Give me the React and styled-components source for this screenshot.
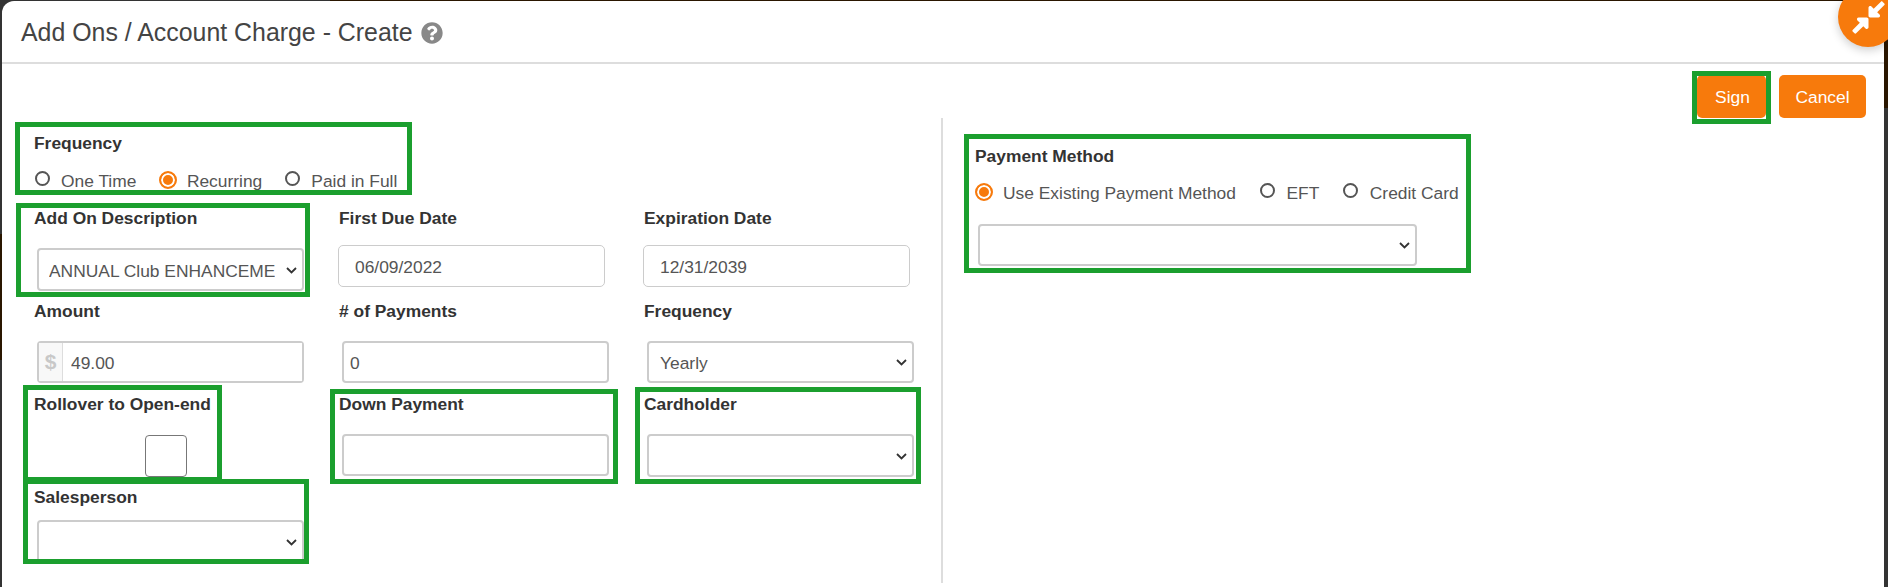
import React from "react";
import styled, { createGlobalStyle } from "styled-components";
import { FaCompressAlt, FaQuestionCircle } from "react-icons/fa";

const Global = createGlobalStyle`
  html, body { margin: 0; padding: 0; background: #333; overflow: hidden; }
  * { box-sizing: border-box; }
`;

const Backdrop = styled.div`
  position: relative;
  width: 1888px;
  height: 587px;
  overflow: hidden;
  padding: 1px 4px 0 2px;
  font-family: "Liberation Sans", Arial, sans-serif;
  font-size: 17.4px;
  color: #555;
  background:
    linear-gradient(#2a1600, #2a1600) 330px 0 / 1558px 1px no-repeat,
    linear-gradient(#2a1600, #2a1600) 0 234px / 2px 126px no-repeat,
    linear-gradient(#2a1600, #2a1600) 1884px 40px / 4px 68px no-repeat,
    #333;
`;

const Modal = styled.div`
  height: 586px;
  background: #fff;
  border-radius: 12px 12px 0 0;
`;

const Header = styled.header`
  display: flex;
  align-items: center;
  gap: 8px;
  height: 63px;
  padding: 2px 0 0 19px;
  border-bottom: 2px solid #ddd;
`;

const Title = styled.h1`
  margin: 0;
  font-size: 24.9px;
  font-weight: 400;
  color: #444;
`;

const Help = styled.span`
  display: flex;
  color: #888;
  font-size: 22px;
`;

const Actions = styled.div`
  display: flex;
  justify-content: flex-end;
  gap: 13px;
  height: 54px;
  padding: 11px 18px 0 0;
`;

const Button = styled.button`
  width: ${(p) => p.$width}px;
  height: 43px;
  padding: 2px 0 0 ${(p) => p.$shift || 0}px;
  border: 0;
  border-radius: 5px;
  background: #f77a0c;
  color: #fff;
  font: inherit;
`;

const Body = styled.div`
  display: flex;
  height: 465px;
`;

const LeftPane = styled.section`
  width: 941px;
  padding: 13px 0 0 32px;
  border-right: 2px solid #ddd;
`;

const RightPane = styled.section`
  padding: 26px 0 0 32px;
`;

const Label = styled.div`
  height: 24px;
  line-height: 24px;
  font-weight: 700;
  color: #333;
  white-space: nowrap;
`;

const RadioRow = styled.div`
  display: flex;
  align-items: center;
  gap: ${(p) => p.$gap}px;
  height: 24px;
  margin-top: ${(p) => p.$top}px;
  padding-left: ${(p) => p.$inset}px;
`;

const RadioItem = styled.label`
  display: flex;
  align-items: center;
  gap: ${(p) => (p.$checked ? 10 : 11.5)}px;
  color: #555;
  white-space: nowrap;
`;

const RadioMark = styled.span`
  flex: none;
  width: ${(p) => (p.$checked ? 18 : 15)}px;
  height: ${(p) => (p.$checked ? 18 : 15)}px;
  margin-top: ${(p) => (p.$checked ? -3 : -5)}px;
  border-radius: 50%;
  border: 2px solid ${(p) => (p.$checked ? "#f77a0c" : "#555")};
  background: ${(p) => (p.$checked ? "#f77a0c" : "#fff")};
  box-shadow: ${(p) => (p.$checked ? "inset 0 0 0 2px #fff" : "none")};
`;

const FieldGrid = styled.div`
  display: grid;
  grid-template-columns: repeat(3, 305px);
  grid-template-rows: repeat(4, 93px);
  margin-top: 13px;
`;

const Field = styled.div`
  min-width: 0;
`;

const controlBox = `
  display: block;
  height: 42px;
  color: #555;
  background: #fff;
  font: inherit;
  outline: none;
`;

const SelectWrap = styled.div`
  position: relative;
  width: ${(p) => p.$width || 267}px;
  margin: ${(p) => p.$top}px 0 0 3px;
`;

const Select = styled.select`
  ${controlBox}
  width: 100%;
  height: ${(p) => p.$height || 43}px;
  padding: 2px 27px 0 ${(p) => p.$pad || 10}px;
  border: 2px solid #ccc;
  border-radius: 4px;
  appearance: none;
`;

const Chevron = styled.svg`
  position: absolute;
  top: 50%;
  right: 7px;
  width: 11px;
  height: 7px;
  margin-top: -3px;
  pointer-events: none;
`;

const Input = styled.input`
  ${controlBox}
  width: 267px;
  margin: ${(p) => p.$top}px 0 0 3px;
  padding: 2px 8px 0 6px;
  border: 2px solid #ccc;
  border-radius: 4px;
`;

const DateInput = styled(Input)`
  margin: 15px 0 0 -1px;
  padding-left: 16px;
  border: 1px solid #ccc;
  border-radius: 5px;
`;

const InputGroup = styled.div`
  display: flex;
  width: 267px;
  height: 42px;
  margin: 18px 0 0 3px;
  border: 2px solid #ccc;
  border-radius: 4px;
`;

const Addon = styled.span`
  width: 24px;
  border-right: 1px solid #ddd;
  background: #f8f8f8;
  color: #c8c8c8;
  font-size: 21px;
  font-weight: 700;
  line-height: 38px;
  text-align: center;
`;

const GroupInput = styled.input`
  flex: 1;
  min-width: 0;
  padding: 2px 0 0 8px;
  border: 0;
  color: #555;
  font: inherit;
  outline: none;
`;

const Checkbox = styled.span`
  display: block;
  width: 42px;
  height: 42px;
  margin: 19px 0 0 111px;
  border: 1px solid #777;
  border-radius: 4px;
`;

const Fab = styled.div`
  position: absolute;
  top: -13px;
  left: 1838px;
  display: flex;
  align-items: center;
  justify-content: center;
  width: 60px;
  height: 60px;
  border-radius: 50%;
  background: #f77a0c;
  color: #fff;
  font-size: 37px;
  box-shadow: 0 3px 10px rgba(0, 0, 0, 0.2);
`;

const Highlight = styled.div`
  position: absolute;
  left: ${(p) => p.$l}px;
  top: ${(p) => p.$t}px;
  width: ${(p) => p.$r - p.$l}px;
  height: ${(p) => p.$b - p.$t}px;
  border: 5px solid #1b9f2e;
  pointer-events: none;
`;

const Arrow = () => (
  <Chevron viewBox="0 0 11 7" fill="none" stroke="#333" strokeWidth="1.8">
    <path d="M1 1l4.5 4.5L10 1" />
  </Chevron>
);

const SelectField = ({ label, value, top, width, pad, height }) => (
  <Field>
    {label && <Label>{label}</Label>}
    <SelectWrap $top={top} $width={width}>
      <Select value={value || ""} onChange={() => {}} $pad={pad} $height={height}>
        <option value={value || ""}>{value || ""}</option>
      </Select>
      <Arrow />
    </SelectWrap>
  </Field>
);

const Radio = ({ checked, children }) => (
  <RadioItem $checked={checked}>
    <RadioMark $checked={checked} />
    {children}
  </RadioItem>
);

const highlights = [
  [15, 122, 412, 195],
  [16, 203, 310, 297],
  [23, 385, 222, 482],
  [23, 479, 309, 564],
  [330, 389, 618, 484],
  [635, 387, 921, 484],
  [964, 134, 1471, 273],
  [1692, 71, 1771, 124],
];

export default function App() {
  return (
    <Backdrop>
      <Global />
      <Modal>
        <Header>
          <Title>Add Ons / Account Charge - Create</Title>
          <Help>
            <FaQuestionCircle />
          </Help>
        </Header>
        <Actions>
          <Button $width={69} $shift={2}>Sign</Button>
          <Button $width={87}>Cancel</Button>
        </Actions>
        <Body>
          <LeftPane>
            <Label>Frequency</Label>
            <RadioRow $inset={0.5} $gap={22.5} $top={14}>
              <Radio>One Time</Radio>
              <Radio checked>Recurring</Radio>
              <Radio>Paid in Full</Radio>
            </RadioRow>
            <FieldGrid>
              <SelectField label="Add On Description" value="ANNUAL Club ENHANCEMENT FEE" top={18} />
              <Field>
                <Label>First Due Date</Label>
                <DateInput readOnly value="06/09/2022" />
              </Field>
              <Field>
                <Label>Expiration Date</Label>
                <DateInput readOnly value="12/31/2039" />
              </Field>

              <Field>
                <Label>Amount</Label>
                <InputGroup>
                  <Addon>$</Addon>
                  <GroupInput readOnly value="49.00" />
                </InputGroup>
              </Field>
              <Field>
                <Label># of Payments</Label>
                <Input readOnly value="0" $top={18} />
              </Field>
              <SelectField label="Frequency" value="Yearly" top={18} pad={11} height={42} />

              <Field>
                <Label>Rollover to Open-end</Label>
                <Checkbox />
              </Field>
              <Field>
                <Label>Down Payment</Label>
                <Input readOnly value="" $top={18} />
              </Field>
              <SelectField label="Cardholder" top={18} />

              <SelectField label="Salesperson" top={11} />
            </FieldGrid>
          </LeftPane>
          <RightPane>
            <Label>Payment Method</Label>
            <RadioRow $inset={0} $gap={24} $top={13}>
              <Radio checked>Use Existing Payment Method</Radio>
              <Radio>EFT</Radio>
              <Radio>Credit Card</Radio>
            </RadioRow>
            <SelectWrap $top={19} $width={439}>
              <Select value="" onChange={() => {}} $height={42}>
                <option value="" />
              </Select>
              <Arrow />
            </SelectWrap>
          </RightPane>
        </Body>
      </Modal>
      <Fab>
        <FaCompressAlt />
      </Fab>
      {highlights.map(([l, t, r, b]) => (
        <Highlight key={`${l}-${t}`} $l={l} $t={t} $r={r} $b={b} />
      ))}
    </Backdrop>
  );
}
